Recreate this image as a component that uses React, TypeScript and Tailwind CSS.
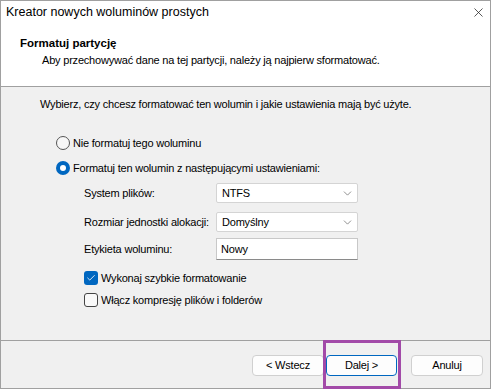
import { Check, ChevronDown, X } from 'lucide-react'

const font = { fontFamily: '"Liberation Sans", Arial, sans-serif' }

const Radio = ({ checked }: { checked?: boolean }) =>
  checked ? (
    <span className="flex items-center justify-center w-[14px] h-[14px] rounded-full bg-[#0067c0]">
      <span className="w-[6px] h-[6px] rounded-full bg-white"></span>
    </span>
  ) : (
    <span className="block w-[14px] h-[14px] rounded-full border border-[#555] bg-[#f7f7f7]"></span>
  )

const Checkbox = ({ checked }: { checked?: boolean }) =>
  checked ? (
    <span className="flex items-center justify-center w-[14px] h-[14px] rounded-[3px] bg-[#0067c0]">
      <Check size={10} strokeWidth={2} color="white" />
    </span>
  ) : (
    <span className="block w-[14px] h-[14px] rounded-[3px] border border-[#444] bg-[#f9f9f9]"></span>
  )

const Combo = ({ value }: { value: string }) => (
  <div className="flex items-center justify-between w-[142px] h-[20px] pl-[5px] pr-[3px] bg-white border border-[#d4d4d4] rounded-[2px]">
    <span>{value}</span>
    <ChevronDown size={13} strokeWidth={1.2} color="#555" />
  </div>
)

const Button = ({ label, primary }: { label: string; primary?: boolean }) => (
  <button
    className={`h-[21px] rounded-[4px] bg-[#fdfdfd] text-black ${
      primary ? 'w-[71px] border border-[#0067c0]' : 'w-[72px] border border-[#d0d0d0]'
    }`}
  >
    {label}
  </button>
)

const App = () => {
  return (
    <div className="relative w-[492px] h-[390px] bg-white text-[12px] text-black" style={font}>
      <div className="flex flex-col w-[491px] h-[389px] border border-[#a0a0a0] bg-[#f0f0f0]">
        <div className="h-[86px] bg-white border-b border-[#a0a0a0]">
          <div className="flex items-center justify-between h-[23px] pl-[5px] pr-[4px] text-[12.5px]">
            <span>Kreator nowych woluminów prostych</span>
            <X size={15} strokeWidth={1.2} color="#222" />
          </div>
          <div className="mt-[12px] pl-[19px] h-[16px] flex items-center font-bold text-[11.5px]">Formatuj partycję</div>
          <div className="pl-[41px] h-[16px] flex items-center text-[11px] tracking-[-0.2px]">
            Aby przechowywać dane na tej partycji, należy ją najpierw sformatować.
          </div>
        </div>

        <div className="h-[254px] border-b border-[#a0a0a0] text-[11px] tracking-[-0.2px]">
          <div className="mt-[9px] pl-[39px] h-[16px] flex items-center">
            Wybierz, czy chcesz formatować ten wolumin i jakie ustawienia mają być użyte.
          </div>
          <div className="mt-[21px] pl-[55px] h-[20px] flex items-center gap-[3px]">
            <Radio />
            <span>Nie formatuj tego woluminu</span>
          </div>
          <div className="mt-[5px] pl-[55px] h-[20px] flex items-center gap-[3px]">
            <Radio checked />
            <span>Formatuj ten wolumin z następującymi ustawieniami:</span>
          </div>
          <div className="mt-[4px] pl-[83px] flex flex-col">
            <div className="flex items-center h-[22px]">
              <span className="w-[132px]">System plików:</span>
              <Combo value="NTFS" />
            </div>
            <div className="flex items-center h-[22px] mt-[7px]">
              <span className="w-[132px]">Rozmiar jednostki alokacji:</span>
              <Combo value="Domyślny" />
            </div>
            <div className="flex items-center h-[22px] mt-[5px]">
              <span className="w-[132px]">Etykieta woluminu:</span>
              <div className="flex items-center w-[142px] h-[22px] pl-[4px] bg-white border border-[#c8c8c8] border-b-[#8a8a8a]">
                Nowy
              </div>
            </div>
            <div className="flex items-center gap-[3px] h-[20px] mt-[8px]">
              <Checkbox checked />
              <span>Wykonaj szybkie formatowanie</span>
            </div>
            <div className="flex items-center gap-[3px] h-[20px] mt-[2px]">
              <Checkbox />
              <span>Włącz kompresję plików i folderów</span>
            </div>
          </div>
        </div>

        <div className="flex items-start justify-end gap-[14px] pt-[14px] pr-[7px] text-[11px] tracking-[-0.2px]">
          <div className="flex gap-[2px]">
            <Button label="< Wstecz" />
            <Button label="Dalej >" primary />
          </div>
          <Button label="Anuluj" />
        </div>
      </div>
      <div className="absolute left-[323px] top-[340px] w-[78px] h-[49px] border-[3px] border-[#a24aa8]"></div>
    </div>
  )
}

export default App
